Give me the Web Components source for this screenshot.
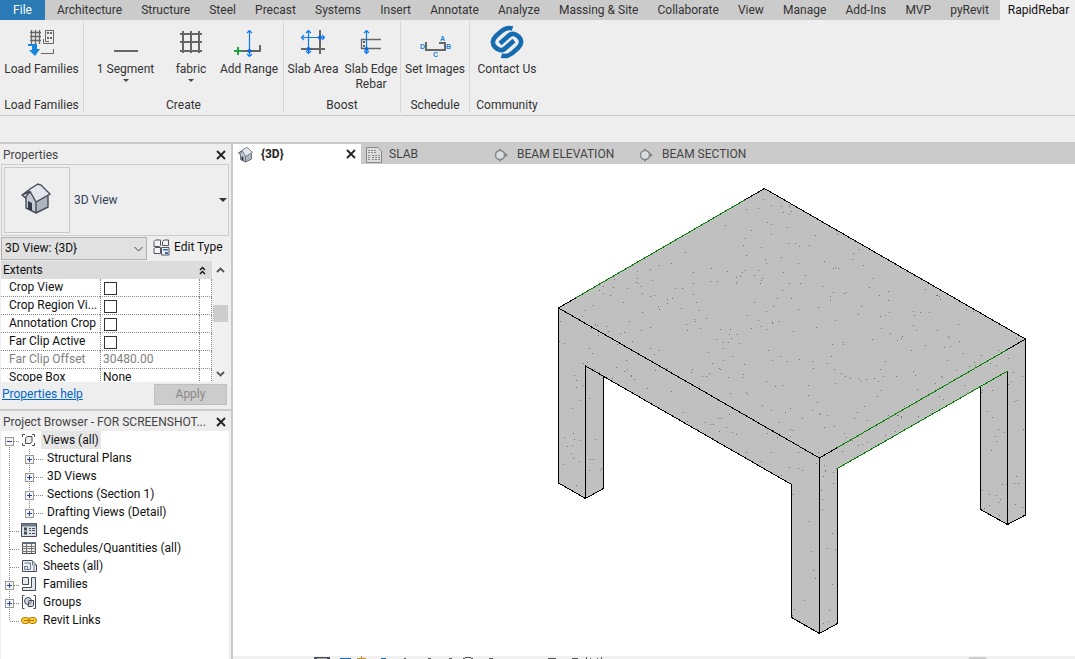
<!DOCTYPE html>
<html lang="en">
<head>
<meta charset="utf-8">
<title>Revit - RapidRebar</title>
<style>
html,body{margin:0;height:100%}
body{font:12px/15px Roboto,"Open Sans",sans-serif;color:#333;background:#eee;overflow:hidden}
</style>
</head>
<body>
<revit-app></revit-app>
<script>
const define = (name, css, html, setup) => customElements.define(name, class extends HTMLElement {
  connectedCallback() {
    if (this.shadowRoot) return;
    const root = this.attachShadow({mode: 'open'});
    const body = typeof html === 'function' ? html(this) : html;
    root.innerHTML = `<style>*{box-sizing:border-box}button,input,select{font:inherit;color:inherit}svg{display:block;flex:none}${css}</style>${body}`;
    if (setup) setup(root, this);
  }
});

const arrowV = (x, y1, y2) => `<path d="M${x} ${y1}V${y2}M${x-2.5} ${y1+3}L${x} ${y1+.5}L${x+2.5} ${y1+3}M${x-2.5} ${y2-3}L${x} ${y2-.5}L${x+2.5} ${y2-3}" stroke="#0a7cf5" fill="none" stroke-width="1.2"/>`;
const house = `
  <path d="M5 15L5 25L15 31L15 17L10 9Z" fill="#c5cad2"/><path d="M15 19L27 13V25L15 31Z" fill="#aeb5c0"/>
  <path d="M1 12L9 6L17 1L20 2L29 11L18 18L15 19L9 11L3 15Z" fill="#e3e6ec"/>
  <path d="M1 12L9 8.500L15 19L29 11L20 2L17 1L9 6L1 12L4 14.500L9 9M5 14V25L15 30L27 24V13M15 19V30" fill="none" stroke="#454c58" stroke-width="1.400"/>
  <path d="M7 18L11 20V28L7 26Z" fill="#343b48"/>`;

const toolIcons = {
  load: `<g stroke="#666" fill="none"><path d="M7.500 5V19M11.500 5V19M15.500 5V19M6 7.500H17M6 11.500H17M6 15.500H17" stroke-width="1.300"/><path d="M21.500 5.500H29.500V18.500H19.500V14M21.500 5.500V16.500H25"/><path d="M17 28.500H29.500V24"/></g><path d="M23 7h2v2h-2zM26 7h2v2h-2zM23 12h2v2h-2zM26 12h2v2h-2z" fill="#666"/><path d="M4 19H13V24H16L11 31L5 25H8V21H4Z" fill="#1685db"/>`,
  segment: `<path d="M6 26H30" stroke="#666" stroke-width="2"/>`,
  fabric: `<path d="M10 6V28M18 6V28M26 6V28M7 9H29M7 17H29M7 26H29" stroke="#666" stroke-width="2"/>`,
  range: `<path d="M11 26H29V20" stroke="#666" stroke-width="2" fill="none"/><path d="M3 26H11M7 22V30" stroke="#22a244" stroke-width="2"/>${arrowV(18.5,5,32)}<circle cx="18.500" cy="26" r="2" fill="#0a6be0"/>`,
  area: `<path d="M25 5V29M6 24H30" stroke="#666" stroke-width="2"/>${arrowV(13.5,5,29)}<path d="M6 12.500H30M9 10L6.500 12.500L9 15M27 10L29.500 12.500L27 15" stroke="#0a7cf5" stroke-width="1.200" fill="none"/><g fill="#0a6be0"><circle cx="13.500" cy="24" r="2"/><circle cx="25" cy="12.500" r="2"/></g>`,
  edge: `<path d="M28 14.500H8.500V23.500H28" stroke="#666" fill="none" stroke-width="1.300"/><path d="M10 16h2v2h-2zM10 20h2v2h-2z" fill="#666"/>${arrowV(13.5,5,29)}<circle cx="13.500" cy="24" r="2" fill="#0a6be0"/>`,
  images: `<path d="M9 17V25H28V18H22" stroke="#666" stroke-width="2" fill="none"/><g font-family="Liberation Sans,sans-serif" font-size="7" font-weight="bold" fill="#1587df"><text x="23" y="16">A</text><text x="3" y="24">D</text><text x="29" y="24">B</text><text x="16" y="32">C</text></g>`,
  contact: `<g transform="translate(2 1)" fill="none" stroke="#146bb0" stroke-width="4.600"><path d="M21.500 2.500C17 1 13 3 10 5.500L5 10C1 14 1 18 4 21C7 24 11 25.500 14 22.500L23 14.500"/><path d="M21.500 2.500C17 1 13 3 10 5.500L5 10C1 14 1 18 4 21C7 24 11 25.500 14 22.500L23 14.500" transform="rotate(180 16 16)"/></g>`
};

define('menu-bar', `
:host{display:flex;height:20px;background:#cbcbcb}
button{border:0;background:none;padding:0;line-height:20px;white-space:nowrap}
.file{width:45px;background:#2a7ab5;color:#fff;flex:none}
nav{display:flex;flex:1;justify-content:space-between;padding:0 11px 0 12px}
.on{flex:none;width:75px;background:#eee;color:#111;padding-left:2px}`,
`<button class="file">File</button><nav>${['Architecture','Structure','Steel','Precast','Systems','Insert','Annotate','Analyze','Massing &amp; Site','Collaborate','View','Manage','Add-Ins','MVP','pyRevit'].map(t=>`<button>${t}</button>`).join('')}</nav><button class="on">RapidRebar</button>`);

define('tool-button', `
:host{display:block}
button{width:100%;border:0;background:none;padding:4px 0 0;display:flex;flex-direction:column;align-items:center;white-space:nowrap}
svg{margin-bottom:1px}
i{border:2px solid transparent;border-top:3px solid #444;border-bottom:0;border-left-width:3px;border-right-width:3px;margin-top:2px}`,
el=>`<button><svg width="36" height="36" viewBox="0 0 36 36">${toolIcons[el.getAttribute('icon')]}</svg><slot></slot>${el.hasAttribute('menu')?'<i></i>':''}</button>`);

define('ribbon-group', `
:host{display:flex;flex-direction:column;justify-content:space-between;border-right:1px solid #d6d6d6;margin:1px 0 2px}
:host(:last-of-type){border-color:transparent}
.tools{display:flex}
footer{text-align:center;line-height:16px}`,
el=>`<div class="tools"><slot></slot></div><footer>${el.getAttribute('label')}</footer>`);

define('tool-ribbon', `
:host{display:flex;height:96px;border-bottom:1px solid #c8c8c8;background:#eee;margin-bottom:26px}
.narrow{width:48px}.medium{width:58px}.wide{width:68px}.wider{width:74px}.full{width:83px}`,`
<ribbon-group label="Load Families"><tool-button class="full" icon="load">Load Families</tool-button></ribbon-group>
<ribbon-group label="Create"><tool-button class="full" icon="segment" menu>1 Segment</tool-button><tool-button class="narrow" icon="fabric" menu>fabric</tool-button><tool-button class="wide" icon="range">Add Range</tool-button></ribbon-group>
<ribbon-group label="Boost"><tool-button class="medium" icon="area">Slab Area</tool-button><tool-button class="medium" icon="edge">Slab Edge<br>Rebar</tool-button></ribbon-group>
<ribbon-group label="Schedule"><tool-button class="wide" icon="images">Set Images</tool-button></ribbon-group>
<ribbon-group label="Community"><tool-button class="wider" icon="contact">Contact Us</tool-button></ribbon-group>`);

define('close-button', `:host{display:block}button{display:block;border:0;background:none;padding:0}`,
`<button aria-label="Close"><svg width="10" height="10" viewBox="0 0 10 10"><path d="M1 1L9 9M9 1L1 9" stroke="#222" stroke-width="1.800"/></svg></button>`);

define('panel-title', `
:host{display:flex;align-items:center;justify-content:space-between;height:20px;padding:2px 3px 0 3px;color:#444;background:#eee}`,
`<span><slot></slot></span><close-button></close-button>`);

define('properties-panel', `
:host{display:block;background:#eee;height:265px;padding-right:2px}
.type{display:flex;align-items:center;margin:0 0 0 1px;height:72px;border:1px solid #ccc;padding:0 1px 0 2px;color:#33415a}
.thumb{width:66px;height:66px;border:1px solid #c8c8c8;display:grid;place-items:center;margin-right:4px}
.type b{margin-left:auto;border:4px solid transparent;border-top-color:#333;border-bottom:0}
.pick{display:flex;align-items:center;height:25px;color:#111}
.sel{position:relative;width:146px;margin-left:1px}
select{appearance:none;width:100%;height:23px;border:1px solid #b0b0b0;border-radius:0;background:#e1e1e1;padding:0 3px;display:block}
.sel svg{position:absolute;right:4px;top:8px}
.edit{display:flex;align-items:center;gap:4px;border:0;background:none;padding:0 0 3px;margin-left:6px}
.grid{display:flex;height:121px;overflow:hidden;background:#fff;color:#111;margin-left:1px}
table{flex:1;border-spacing:0;table-layout:fixed;width:0}
thead th{background:#dcdcdc;height:18px;padding:0 2px;text-align:left;font-weight:400;border:0}
thead th:last-child{padding:0}
tbody th,td{height:18px;padding:0;line-height:17px;border-bottom:1px dotted #888;text-align:left;font-weight:400;white-space:nowrap;overflow:hidden}
tbody th{padding-left:8px}
td{border-left:1px dotted #888;padding-left:2px}
td:last-child{border-right:1px dotted #888}
.off{color:#808080}
input{appearance:none;display:block;width:13px;height:13px;border:1px solid #333;background:#fff;margin:2px 0 0 1px}
.scroll{width:17px;background:#f0f0f0;display:flex;flex-direction:column;align-items:center;padding:6px 0 5px}
.scroll i{width:15px;height:17px;background:#cdcdcd;margin:32px 0 auto}
.foot{display:flex;justify-content:space-between;padding:2px 2px 0 2px}
a{color:#0066cc;line-height:21px}
.apply{width:73px;height:21px;border:1px solid #bfbfbf;background:#ccc;color:#888;padding:0}`,`
<panel-title>Properties</panel-title>
<div class="type"><div class="thumb"><svg width="32" height="34" viewBox="0 0 32 34">${house}</svg></div>3D View<b></b></div>
<div class="pick"><div class="sel"><select aria-label="View"><option>3D View: {3D}</option></select><svg width="9" height="8" viewBox="0 0 9 8"><path d="M.5 2L4.500 6L8.500 2" fill="none" stroke="#444"/></svg></div>
<button class="edit"><svg width="17" height="17" viewBox="0 0 17 17"><g fill="#f4f4f4" stroke="#50555f"><path d="M1 2.500L2.500 1H7.500V6.500L6.500 7.500H1Z"/><path d="M9.500 2.500L11 1H15.500V6.500H9.500Z"/><path d="M1 9.500L2.500 8.500H7.500V14.500H1Z"/><path d="M8.500 8.500H16V16H8.500Z"/></g><path d="M10 10h5v1.500h-5zM12 13h3v2h-3z" fill="#2d6fae"/></svg>Edit Type</button></div>
<div class="grid"><table><colgroup><col style="width:99px"><col><col style="width:13px"></colgroup>
<thead><tr><th colspan="2">Extents</th><th><svg width="7" height="9" viewBox="0 0 7 9"><path d="M1 4L3.500 1.500L6 4M1 8L3.500 5.500L6 8" fill="none" stroke="#111" stroke-width="1.400"/></svg></th></tr></thead>
<tbody>
${[['Crop View','crop'],['Crop Region Vi...','region'],['Annotation Crop','anno'],['Far Clip Active','clip']].map(([t,i])=>`<tr><th><label for="${i}">${t}</label></th><td><input type="checkbox" id="${i}"></td><td></td></tr>`).join('')}
<tr class="off"><th>Far Clip Offset</th><td>30480.00</td><td></td></tr>
<tr><th>Scope Box</th><td>None</td><td></td></tr></tbody></table>
<div class="scroll"><svg width="9" height="6" viewBox="0 0 9 6"><path d="M1 5L4.500 1.500L8 5" fill="none" stroke="#555" stroke-width="1.800"/></svg><i></i><svg width="9" height="6" viewBox="0 0 9 6"><path d="M1 1L4.500 4.500L8 1" fill="none" stroke="#555" stroke-width="1.800"/></svg></div></div>
<div class="foot"><a href="#help">Properties help</a><button class="apply" disabled>Apply</button></div>`);

const treeIcons = {
  views:`<path d="M4 2.500H1.500V5M1.500 11V13.500H4M11 2.500H13.500V5M13.500 11V13.500H11" /><path d="M4.500 6.500L6 4.500H11V9.500L9.500 11.500H4.500Z" fill="#eee"/>`,
  legends:`<path d="M.5 1.500H15.500V14.500H.5Z" fill="#dfe3e8"/><path d="M1 3H15" stroke="#6c7a8c" stroke-width="3"/><path d="M3 7H6M3 11H6" stroke-width="3"/><path d="M8 6.500H10M11 6.500H14M8 8.500H10M11 8.500H14M8 11.500H10M11 11.500H14"/>`,
  schedules:`<path d="M1.500 2.500H14.500V13.500H1.500Z" fill="#eee"/><path d="M1 3H15" stroke="#5d6b7c" stroke-width="2"/><path d="M1 6.500H15M1 8.500H15M1 11.500H15M5.500 4V13M10.500 4V13" stroke="#777"/>`,
  sheets:`<path d="M1.500 2.500H11L15.500 7V13.500H1.500Z" fill="#eef0f3"/><path d="M11.500 2.500V7H15M3.500 5H9.500V11.500H3.500V8.500H6.500V11M13 8V13" stroke="#667790"/>`,
  families:`<path d="M1.500 1.500H7.500V8.500H1.500ZM10.500 1.500H14.500V14.500H1.500V11.500H10.500Z" fill="#e4e7ec"/>`,
  groups:`<path d="M3.500 1.500H1.500V14.500H3.500M12.500 1.500H14.500V14.500H12.500"/><circle cx="7" cy="7" r="3.500" fill="#d0d8e2"/><path d="M8 6.500H12.500V11.500L11 12.500H7Z" fill="#b8c2cf88"/>`,
  links:`<g stroke="#a87400" fill="none"><rect x=".500" y="5.500" width="8" height="6" rx="3" fill="#ffcd2e"/><rect x="7.500" y="5.500" width="8" height="6" rx="3" fill="#ffcd2e"/><path d="M3 8.500H6M10 8.500H13M6 8.500H10"/></g>`
};
define('tree-item', `
:host{display:flex;height:18px;line-height:18px;color:#111;white-space:nowrap}
span{padding:0 2px}
.sel{background:#e5e5e5}`, el => {
  const a = n => el.hasAttribute(n), deep = a('deep'), icon = el.getAttribute('icon'), x = deep ? 28.5 : 8.5;
  const top = a('first') ? 10 : 0, bottom = a('last') ? 10 : 18;
  const box = a('plus') || a('minus'), w = deep ? 44 : 40;
  return `<svg width="${w}" height="18" viewBox="0 0 ${w} 18">
  <path d="M8.500 ${top}V${bottom}${deep?`M28.500 0V${a('end')?10:18}M29 10.500H43`:'M9 10.500H19'}" stroke="#888" stroke-dasharray="1 1" fill="none"/>
  ${box?`<rect x="${x-4}" y="6.500" width="8" height="8" fill="#f4f4f4" stroke="#999"/><path d="M${x-2.5} 10.500H${x+2.5}${a('plus')?`M${x} 8V13`:''}" stroke="#234a9c"/>`:''}
  ${icon?`<g transform="translate(20 1)" fill="none" stroke="#444c58">${treeIcons[icon]}</g>`:''}</svg><span class="${a('first')?'sel':''}"><slot></slot></span>`;
});

define('project-browser', `
:host{display:flex;flex-direction:column;flex:1;border-top:2px solid #ccc}
.tree{flex:1;background:#fff;margin:0 2px 0 1px}
panel-title{margin-right:2px}`,`
<panel-title>Project Browser - FOR SCREENSHOT...</panel-title><div class="tree">
<tree-item icon="views" first minus>Views (all)</tree-item>
<tree-item deep plus>Structural Plans</tree-item><tree-item deep plus>3D Views</tree-item>
<tree-item deep plus>Sections (Section 1)</tree-item><tree-item deep plus end>Drafting Views (Detail)</tree-item>
<tree-item icon="legends">Legends</tree-item><tree-item icon="schedules">Schedules/Quantities (all)</tree-item>
<tree-item icon="sheets">Sheets (all)</tree-item><tree-item icon="families" plus>Families</tree-item>
<tree-item icon="groups" plus>Groups</tree-item><tree-item icon="links" last>Revit Links</tree-item></div>`);

const tabIcons = {
  house:`<g transform="scale(.5)"><g stroke-width="2">${house}</g></g>`,
  schedule:`<path d="M.5 .5H12L15.500 4V15.500H.5Z" fill="#ddd" stroke="#85898f"/><path d="M2 3.500H11M2 5.500H11M2 8.500H5M2 10.500H5M2 12.500H5M6 8.500H14M6 10.500H14M6 12.500H14" stroke="#888" fill="none" stroke-dasharray="2 1"/>`,
  section:`<path d="M5 1L14 8L5 15Z" fill="#85888e"/><circle cx="6" cy="8" r="4.500" fill="#ddd" stroke="#85888e" stroke-width="1.500"/>`
};
define('view-tab', `
:host{display:block;width:128px}
:host([wide]){width:145px}
button{width:100%;height:20px;border:0;background:none;padding:1px 0 0 5px;display:flex;align-items:center;gap:7px;white-space:nowrap;color:#444}
:host([active]){display:flex;align-items:center;background:#fff;padding-right:5px}
:host([active]) button{font-weight:700;color:#222}`,
el=>`<button><svg width="16" height="16" viewBox="0 0 16 16">${tabIcons[el.getAttribute('icon')]}</svg><slot></slot></button>${el.hasAttribute('active')?'<close-button></close-button>':''}`);

define('model-view', `
:host{display:block;flex:1;min-height:0;background:#fff}
svg{width:100%;height:100%}`, () => {
  const outline = '558.5,308 764.5,188.5 1025.5,339 1025.5,515 1007.5,524.5 980.5,509.5 980.5,387 837.5,468.5 837.5,623.5 819.5,633.5 791.5,617.5 791.5,484.5 603.5,376 603.5,488.5 585.5,498.5 558.5,483';
  let seed = 7, dots = '';
  const rnd = () => (seed = (seed * 16807) % 2147483647) / 2147483647;
  for (let i = 0; i < 1000; i++) dots += `M${558 + Math.floor(rnd() * 467)} ${190 + Math.floor(rnd() * 442)}h1v1h-1z`;
  return `<svg viewBox="233 164 842 492" shape-rendering="crispEdges" role="img" aria-label="Concrete slab on beams and columns">
  <clipPath id="c"><polygon points="${outline}"/></clipPath>
  <polygon points="${outline}" fill="#c0c0c0"/><path d="${dots}" fill="#747474" clip-path="url(#c)"/>
  <g fill="none" stroke="#000"><path d="M837.500 468.500V623.500L819.500 633.500L791.500 617.500V484.500L585.500 366V498.500L558.500 483V308L575.500 298M745.500 199.500L764.500 188.500L1025.500 339V515L1007.500 524.500L980.500 509.500V387M603.500 376V488.500L585.500 498.500M558.500 308L819.500 458L837.500 447.500M1007.500 349.500L1025.500 339M819.500 458V633.500M1007.500 371V524.500"/>
  <path stroke="#008000" d="M575.500 298L745.500 199.500M837.500 447.500L1007.500 349.500M837.500 468.500L1007.500 371"/></g></svg>`;
});

define('status-strip', `
:host{display:block;height:3px;background:#f0f0f0;overflow:hidden}`,
`<svg width="842" height="3" viewBox="233 656 842 3"><path d="M314 657h16v2h-16z" fill="#444b55"/><path d="M317 658h10v1h-10z" fill="#aaa"/><path d="M340 658h11v1h-11zM381 658h5v1h-5z" fill="#1766ab"/><path d="M357 658h9v1h-9zM361 656h1v2h-1z" fill="#c58b2d"/><path d="M404 658h2v1h-2zM428 658h3v1h-3zM449 658h3v1h-3zM463 658h2v1h-2zM465 657h6v1h-6zM471 658h2v1h-2zM489 658h4v1h-4zM548 658h8v1h-8zM572 658h6v1h-6zM586 657h1v2h-1zM590 658h1v1h-1zM597 658h1v1h-1zM601 657h1v2h-1z" fill="#555"/><path d="M969 657h17v2h-17z" fill="#ccc"/></svg>`);

define('revit-app', `
:host{display:flex;flex-direction:column;height:100vh;background:#eee}
main{flex:1;display:flex;min-height:0;border-top:2px solid #c8c8c8}
aside{width:233px;flex:none;display:flex;flex-direction:column;border-right:2px solid #c8c8c8}
section{flex:1;min-width:0;display:flex;flex-direction:column}
.tabs{display:flex;height:20px;background:#cbcbcb}`,`
<menu-bar></menu-bar><tool-ribbon></tool-ribbon>
<main><aside><properties-panel></properties-panel><project-browser></project-browser></aside>
<section><div class="tabs"><view-tab icon="house" active>{3D}</view-tab><view-tab icon="schedule">SLAB</view-tab><view-tab icon="section" wide>BEAM ELEVATION</view-tab><view-tab icon="section" wide>BEAM SECTION</view-tab></div>
<model-view></model-view><status-strip></status-strip></section></main>`);
</script>
</body>
</html>
